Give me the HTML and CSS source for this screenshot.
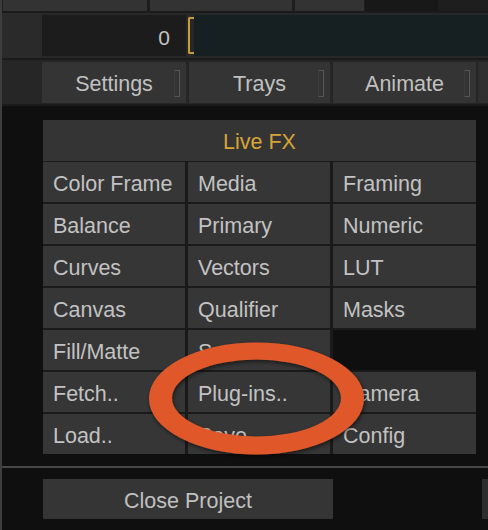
FILE: index.html
```html
<!DOCTYPE html>
<html>
<head>
<meta charset="utf-8">
<link rel="stylesheet" href="styles.css">
</head>
<body>
<div class="app">
  <div class="panel">
    <div class="tabs">
      <div class="tab tab-a"></div>
      <div class="tab tab-b"></div>
      <div class="tab tab-c"></div>
      <div class="tab-dim"></div>
    </div>
    <div class="timebar">
      <div class="lead"></div>
      <div class="numfield">0</div>
      <div class="bracket"></div>
      <div class="timeline"></div>
    </div>
    <div class="modebar">
      <div class="lead"></div>
      <div class="mode mode-1">Settings<span class="mark"></span></div>
      <div class="mode mode-2">Trays<span class="mark"></span></div>
      <div class="mode mode-3">Animate<span class="mark"></span></div>
      <div class="mode-stub"></div>
    </div>
  </div>

  <div class="grid">
    <div class="cell header">Live FX</div>
    <div class="cell">Color Frame</div>
    <div class="cell">Media</div>
    <div class="cell">Framing</div>
    <div class="cell">Balance</div>
    <div class="cell">Primary</div>
    <div class="cell">Numeric</div>
    <div class="cell">Curves</div>
    <div class="cell">Vectors</div>
    <div class="cell">LUT</div>
    <div class="cell">Canvas</div>
    <div class="cell">Qualifier</div>
    <div class="cell">Masks</div>
    <div class="cell">Fill/Matte</div>
    <div class="cell">Sparks</div>
    <div class="cell empty"></div>
    <div class="cell">Fetch..</div>
    <div class="cell">Plug-ins..</div>
    <div class="cell">Camera</div>
    <div class="cell">Load..</div>
    <div class="cell">Save..</div>
    <div class="cell">Config</div>
  </div>

  <div class="separator"></div>

  <div class="footer">
    <div class="close-btn">Close Project</div>
    <div class="footer-stub"></div>
  </div>

  <svg class="highlight" width="240" height="140" viewBox="0 0 240 140">
    <defs>
      <filter id="sh" x="-10%" y="-10%" width="120%" height="130%">
        <feDropShadow dx="1" dy="2" stdDeviation="2" flood-color="#000" flood-opacity="0.55"/>
      </filter>
    </defs>
    <path fill="#e0592a" fill-rule="evenodd" filter="url(#sh)"
      d="M14 69.5 A107.5 56 0 1 0 229 69.5 A107.5 56 0 1 0 14 69.5 Z
         M37 69 A84.5 38.5 0 1 0 206 69 A84.5 38.5 0 1 0 37 69 Z"/>
  </svg>
</div>
</body>
</html>
```
FILE: styles.css
```css
* { box-sizing: border-box; }
html, body { margin: 0; padding: 0; }
body {
  background: #0f0f0f;
  font-family: "Liberation Sans", Arial, sans-serif;
  width: 488px;
  height: 530px;
  overflow: hidden;
}
.app {
  position: relative;
  height: 530px;
  border-left: 2px solid #3d3d3d;
}
.panel {
  background: #1b1b1b;
  padding-bottom: 2px;
}
.tabs {
  display: flex;
  height: 11px;
  gap: 3px;
  padding-left: 1px;
  background: #1e1e1e;
}
.tab { background: #333333; height: 11px; }
.tab-a { width: 144px; }
.tab-b { width: 142px; }
.tab-c { width: 69px; }
.tab-dim {
  width: 73px;
  margin-left: -2px;
  background: #181818;
}
.timebar {
  margin-top: 2px;
  height: 45px;
  display: flex;
  align-items: center;
  background: #282828;
}
.lead { width: 40px; align-self: stretch; background: #2a2a2a; }
.numfield {
  width: 144px;
  height: 41px;
  background: #1c1c1c;
  color: #c4c4c4;
  font-size: 21px;
  text-align: right;
  padding-right: 16px;
  padding-top: 2px;
  line-height: 41px;
}
.bracket {
  width: 6px;
  height: 37px;
  margin-left: 2px;
  border: 2px solid #c79a3a;
  border-right: none;
  border-radius: 2px 0 0 2px;
}
.timeline {
  flex: 1;
  height: 41px;
  background: #162022;
}
.modebar {
  margin-top: 2px;
  height: 44px;
  display: flex;
  align-items: center;
  gap: 3px;
  background: #252525;
}
.modebar .lead { background: #262626; margin-right: -3px; }
.mode {
  position: relative;
  height: 41px;
  background: #343434;
  color: #c0c0c0;
  font-size: 21.5px;
  display: flex;
  align-items: center;
  justify-content: center;
  padding-top: 4px;
}
.mode-1 { width: 144px; }
.mode-2 { width: 141px; }
.mode-3 { width: 143px; }
.mode-stub { flex: 1; height: 41px; background: #303030; margin-left: -1px; }
.mark {
  position: absolute;
  right: 6px;
  top: 8px;
  width: 6px;
  height: 27px;
  border: 1px solid #555555;
  border-left-color: #3c3c3c;
}
.grid {
  margin: 14px 0 0 41px;
  width: 433px;
  display: grid;
  grid-template-columns: 142px 142px 143px;
  grid-auto-rows: 40px;
  column-gap: 3px;
  row-gap: 2px;
  background: #1a1a1a;
}
.cell {
  background: #363636;
  color: #c2c2c2;
  font-size: 21.5px;
  display: flex;
  align-items: center;
  padding-left: 10px;
  padding-top: 4px;
  white-space: nowrap;
}
.cell.header {
  grid-column: 1 / 4;
  justify-content: center;
  padding-left: 0;
  height: 41px;
  color: #d6a536;
  background: #343434;
}
.cell.empty { background: #0f0f0f; }
.separator {
  margin-top: 12px;
  height: 2px;
  background: #474747;
}
.footer {
  margin-top: 11px;
  display: flex;
  height: 40px;
}
.close-btn {
  margin-left: 41px;
  width: 290px;
  background: #353535;
  color: #c0c0c0;
  font-size: 21.5px;
  display: flex;
  align-items: center;
  justify-content: center;
  padding-top: 4px;
}
.footer-stub {
  margin-left: auto;
  width: 6px;
  background: #2e2e2e;
}
.highlight {
  position: absolute;
  left: 133px;
  top: 329px;
}
```
